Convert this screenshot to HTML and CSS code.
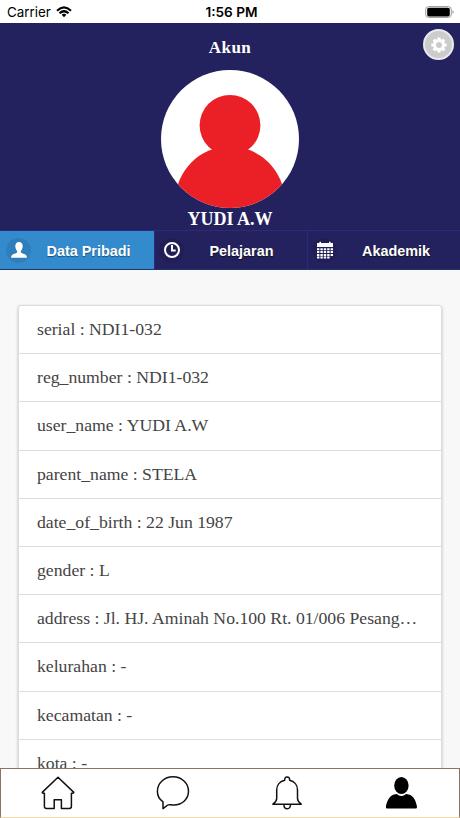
FILE: index.html
```html
<!DOCTYPE html>
<html lang="id">
<head>
  <meta charset="UTF-8">
  <meta name="viewport" content="width=device-width, initial-scale=1.0">
  <title>Akun</title>
  <link rel="stylesheet" href="styles.css">
</head>
<body>
  <div class="app">
    <div class="status-bar">
      <div class="carrier">
        <span>Carrier</span>
        <svg width="16" height="12" viewBox="0 0 16 12" fill="none" stroke="#000" stroke-width="2.2">
          <path d="M1 4.7Q8-1.8 15 4.7M3.5 7.3Q8 3.2 12.5 7.3"/>
          <path d="M5.6 8.7Q8 6.8 10.4 8.7L8 11.3Z" fill="#000" stroke="none"/>
        </svg>
      </div>
      <div class="time">1:56 PM</div>
      <svg class="battery" width="29" height="12" viewBox="0 0 29 12">
        <rect x="0.7" y="0.6" width="25.6" height="10.8" rx="3" fill="#fff" stroke="#999"/>
        <rect x="2.2" y="1.7" width="22.6" height="8.8" rx="1.8"/>
        <path d="M27.5 4.2q1.2.4 1.2 1.8t-1.2 1.8z" fill="#999"/>
      </svg>
    </div>

    <header class="header">
      <h1>Akun</h1>
      <button class="settings" aria-label="Settings">
        <svg width="16" height="16" viewBox="-8 -8 16 16">
          <circle r="4.5" fill="none" stroke="#fff" stroke-width="3"/>
          <path d="M0-7.6V-4.5M0 4.5V7.6M-7.6 0H-4.5M4.5 0H7.6M-5.3-5.3L-3.2-3.2M3.2 3.2L5.3 5.3M-5.3 5.3L-3.2 3.2M3.2-3.2L5.3-5.3" stroke="#fff" stroke-width="3.2"/>
        </svg>
      </button>
      <svg class="avatar" width="138" height="138" viewBox="0 0 138 138">
        <defs>
          <clipPath id="round"><circle cx="69" cy="69" r="69"/></clipPath>
        </defs>
        <g clip-path="url(#round)">
          <rect width="138" height="138" fill="#fff"/>
          <circle cx="69" cy="55.3" r="30.4" fill="#eb2027"/>
          <circle cx="69" cy="131" r="54.6" fill="#eb2027"/>
        </g>
      </svg>
      <div class="name">YUDI A.W</div>
    </header>

    <div class="tabs">
      <div class="tab active">
        <span class="tab-icon">
          <svg width="18" height="18" viewBox="0 0 18 18">
            <path d="M9 1C6.5 1 5.3 2.8 5.3 5C5.3 7.2 6.1 8.8 7.1 10V11.4C6.6 12.6 1 12.4 1 16.8H17C17 12.4 11.4 12.6 10.9 11.4V10C11.9 8.8 12.7 7.2 12.7 5C12.7 2.8 11.5 1 9 1Z" fill="#fff"/>
          </svg>
        </span>
        <span class="tab-label">Data Pribadi</span>
      </div>
      <div class="tab">
        <span class="tab-icon">
          <svg width="18" height="18" viewBox="0 0 18 18" fill="none" stroke="#fff" stroke-width="2">
            <circle cx="9" cy="9" r="7"/>
            <path d="M9 4V9.6H12.7"/>
          </svg>
        </span>
        <span class="tab-label">Pelajaran</span>
      </div>
      <div class="tab">
        <span class="tab-icon">
          <svg width="18" height="18" viewBox="0 0 18 18" stroke="#fff" fill="none">
            <path d="M1 2H17V6H1Z" fill="#fff" stroke="none"/>
            <path d="M4.2 .8V3M13.8 .8V3" stroke-width="1.6"/>
            <path d="M1 8.2H17M1 11.1H17M1 14H17M1 16.6H13.6" stroke-width="2" stroke-dasharray="2.4 1"/>
          </svg>
        </span>
        <span class="tab-label">Akademik</span>
      </div>
    </div>

    <main class="content">
      <div class="card">
        <div class="item">serial : NDI1-032</div>
        <div class="item">reg_number : NDI1-032</div>
        <div class="item">user_name : YUDI A.W</div>
        <div class="item">parent_name : STELA</div>
        <div class="item">date_of_birth : 22 Jun 1987</div>
        <div class="item">gender : L</div>
        <div class="item">address : Jl. HJ. Aminah No.100 Rt. 01/006 Pesang…</div>
        <div class="item">kelurahan : -</div>
        <div class="item">kecamatan : -</div>
        <div class="item">kota : -</div>
      </div>
    </main>

    <nav class="bottom-nav">
      <a>
        <svg width="34" height="34" viewBox="0 0 34 34">
          <path d="M17 1.2L1.2 16.4Q1.4 17.6 3.4 17.3V30.5Q3.5 32.4 5.6 32.4H13.2V23.8H20.4V32.4H28.4Q30.4 32.4 30.4 30.5V17.3Q32.5 17.6 32.8 16.4Z"/>
        </svg>
      </a>
      <a>
        <svg width="34" height="34" viewBox="0 0 34 34">
          <path d="M7 32.6V25.8C3.4 23.2 1.4 19.4 1.4 15.4C1.4 7 8.4 .8 17 .8S32.5 7.2 32.5 15.1C32.5 23 26.5 29 17.6 29C14 28.9 12.8 28.3 11.8 29Z"/>
        </svg>
      </a>
      <a>
        <svg width="34" height="34" viewBox="0 0 34 34">
          <path d="M14.7 4.3Q14.4 1 17.1 1T19.6 4.3C24.4 5.3 27.5 9.2 27.5 14V22.5Q27.6 25.4 31.2 28.2H2.9Q6.7 25.4 6.7 22.5V14C6.7 9.2 9.8 5.3 14.7 4.3ZM13.9 28.2Q13.9 32.8 17.2 32.8T20.5 28.2"/>
        </svg>
      </a>
      <a>
        <svg width="34" height="34" viewBox="0.6 0 34 34">
          <ellipse cx="17" cy="9.5" rx="7.2" ry="8.6" fill="#000" stroke="none"/>
          <path d="M9.4 18.6Q12.1 17.8 12.3 17.9Q14.5 20 17 20T21.7 17.9Q22.7 18 25.2 18.8C29.6 20.2 31.4 25.2 32.6 30.4Q32.9 32.6 31 32.6H3Q1.1 32.6 1.5 30.4C2.7 25 4.9 20 9.4 18.6Z" fill="#000" stroke="none"/>
        </svg>
      </a>
    </nav>
  </div>
</body>
</html>
```

FILE: styles.css
```css
* {
  box-sizing: border-box;
}

body {
  margin: 0;
  font-family: "Liberation Serif", "Times New Roman", serif;
}

.app {
  display: flex;
  flex-direction: column;
  width: 460px;
  height: 818px;
  overflow: hidden;
  background: #f8f8f8;
}

/* Status bar */
.status-bar {
  display: grid;
  grid-template-columns: 1fr auto 1fr;
  align-items: center;
  flex: none;
  height: 23px;
  padding: 0 6px 0 7px;
  background: #fff;
  font: 13.4px Inter, sans-serif;
}

.carrier {
  display: flex;
  align-items: center;
  gap: 5px;
}

.time {
  padding-left: 2px;
  font-size: 13.6px;
  font-weight: 600;
}

.battery {
  justify-self: end;
}

/* Header */
.header {
  position: relative;
  display: flex;
  flex-direction: column;
  align-items: center;
  flex: none;
  height: 207px;
  background: #24215f;
  color: #fff;
}

.header h1 {
  margin: 15px 0 12px;
  font-size: 17px;
  line-height: 20px;
  letter-spacing: 0.5px;
}

.settings {
  position: absolute;
  top: 6px;
  right: 6px;
  display: grid;
  place-items: center;
  width: 31px;
  height: 31px;
  padding: 0;
  border: 2px solid #e9e9ed;
  border-radius: 50%;
  background: #ccc;
}

.avatar {
  flex: none;
}

.name {
  font-size: 18px;
  font-weight: bold;
  line-height: 23px;
}

/* Tabs */
.tabs {
  display: grid;
  grid-template-columns: 154px 153px 153px;
  flex: none;
  height: 40px;
  border-top: 1px solid #2d2a7c;
  border-bottom: 1px solid #1d3766;
  background: #24215f;
}

.tab {
  display: flex;
  align-items: center;
  padding-left: 4px;
  color: #fff;
  font: bold 14.4px "Liberation Sans", Arial, sans-serif;
  text-shadow: 0 1px 1px #111;
}

.tab + .tab {
  border-left: 1px solid #2d2a7c;
}

.tab.active {
  padding-left: 6px;
  background: #338bce;
  text-shadow: 0 1px 1px #14517f;
}

.tab-icon {
  display: grid;
  place-items: center;
  width: 25px;
  height: 25px;
  border-radius: 50%;
  background: #211e56;
}

.active .tab-icon {
  background: #2f7eb9;
}

.tab-label {
  flex: 1;
  padding: 2px 8px 0 0;
  text-align: center;
}

.tab:last-child .tab-label {
  padding-right: 5px;
}

/* Student data */
.content {
  flex: 1;
  min-height: 0;
  padding: 35px 18px 0;
  overflow: hidden;
}

.card {
  border: 1px solid #ddd;
  border-radius: 3px;
  background: #fff;
  box-shadow: 0 1px 3px rgba(0, 0, 0, 0.25);
}

.item {
  height: 48.2px;
  padding: 0 18px;
  border-bottom: 1px solid #ddd;
  overflow: hidden;
  color: #444;
  font-size: 17.7px;
  line-height: 47px;
  text-overflow: ellipsis;
  white-space: nowrap;
}

/* Bottom navigation */
.bottom-nav {
  display: grid;
  grid-template-columns: repeat(4, 1fr);
  flex: none;
  height: 50px;
  border: 1px solid #8d7364;
  border-bottom-color: #f5d9a8;
  background: #fff;
}

.bottom-nav a {
  display: grid;
  place-items: center;
}

.bottom-nav svg {
  fill: none;
  stroke: #111;
  stroke-width: 1.5;
  stroke-linejoin: round;
}
```
